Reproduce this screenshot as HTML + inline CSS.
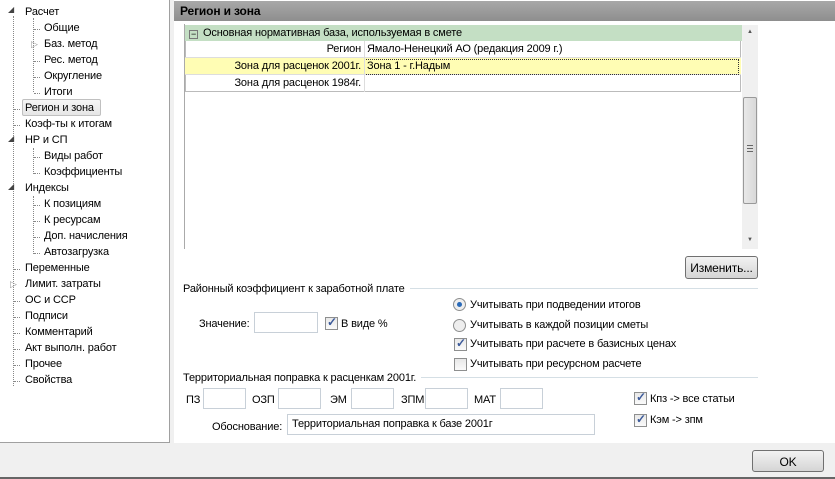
<!DOCTYPE html>
<html><head><meta charset="utf-8"><style>
*{box-sizing:border-box;margin:0;padding:0}
body{width:835px;height:479px;background:#f0f0f0;font-family:"Liberation Sans",sans-serif;font-size:11px;color:#000;position:relative;overflow:hidden;letter-spacing:-0.15px}
.a{position:absolute;white-space:nowrap}
.tree{left:0;top:0;width:170px;height:443px;background:#fff;border:1px solid #a0a0a0;border-top:none;border-left:none}
.tw{position:absolute;left:0;top:2px;width:168px;height:420px}
.ti{position:absolute;white-space:nowrap}
.vl{position:absolute;border-left:1px dotted #888}
.hl{position:absolute;border-top:1px dotted #888;width:6px}
.main{left:174px;top:0;width:661px;height:443px;background:#fff}
.hdr{left:174px;top:1px;width:661px;height:20px;background:linear-gradient(#a8a8a8,#8e8e8e);font-weight:bold;font-size:12px;padding:3px 6px;color:#000}
.inp{position:absolute;background:#fff;border:1px solid #c8d0d8;height:21px}
.cb{position:absolute;width:13px;height:13px;border:1px solid #8e8f8f;background:linear-gradient(#e8e8e8,#fafafa)}
.cb.on::after{content:"✓";position:absolute;left:1px;top:-3px;font-size:12px;color:#3c5a9a;font-weight:bold}
.rb{position:absolute;width:13px;height:13px;border:1px solid #8e8f8f;border-radius:50%;background:#eee}
.rb.on::after{content:"";position:absolute;left:3px;top:3px;width:5px;height:5px;border-radius:50%;background:#2a6ab8}
.btn{position:absolute;border:1px solid #707070;border-radius:3px;background:linear-gradient(#f2f2f2,#d5d5d5);text-align:center;font-size:12px}
.sep{position:absolute;border-top:1px solid #d5dfe5;height:0}
.lbl{background:#fff;padding-right:5px;z-index:2}
</style></head><body>
<div class="a tree"><div class="tw">
<div class="vl" style="left:13px;top:14px;height:370px"></div>
<div class="vl" style="left:33px;top:16px;height:74px"></div>
<div class="vl" style="left:33px;top:146px;height:26px"></div>
<div class="vl" style="left:33px;top:194px;height:58px"></div>
<div class="ti" style="left:8px;top:3px;font-size:8px;color:#444">◢</div><div class="ti" style="left:25px;top:4px">Расчет</div>
<div class="hl" style="left:34px;top:27px"></div><div class="ti" style="left:44px;top:20px">Общие</div>
<div class="ti" style="left:31px;top:37px;font-size:9px;color:#999">▷</div><div class="ti" style="left:44px;top:36px">Баз. метод</div>
<div class="hl" style="left:34px;top:59px"></div><div class="ti" style="left:44px;top:52px">Рес. метод</div>
<div class="hl" style="left:34px;top:75px"></div><div class="ti" style="left:44px;top:68px">Округление</div>
<div class="hl" style="left:34px;top:91px"></div><div class="ti" style="left:44px;top:84px">Итоги</div>
<div class="hl" style="left:14px;top:107px"></div><div class="ti" style="left:22px;top:97px;width:79px;height:17px;border:1px solid #c0c0c0;border-radius:2px;background:linear-gradient(#f6f6f6,#e6e6e6);padding:2px 2px">Регион и зона</div>
<div class="hl" style="left:14px;top:123px"></div><div class="ti" style="left:25px;top:116px">Коэф-ты к итогам</div>
<div class="ti" style="left:8px;top:132px;font-size:8px;color:#444">◢</div><div class="ti" style="left:25px;top:132px">НР и СП</div>
<div class="hl" style="left:34px;top:155px"></div><div class="ti" style="left:44px;top:148px">Виды работ</div>
<div class="hl" style="left:34px;top:171px"></div><div class="ti" style="left:44px;top:164px">Коэффициенты</div>
<div class="ti" style="left:8px;top:180px;font-size:8px;color:#444">◢</div><div class="ti" style="left:25px;top:180px">Индексы</div>
<div class="hl" style="left:34px;top:203px"></div><div class="ti" style="left:44px;top:196px">К позициям</div>
<div class="hl" style="left:34px;top:219px"></div><div class="ti" style="left:44px;top:212px">К ресурсам</div>
<div class="hl" style="left:34px;top:235px"></div><div class="ti" style="left:44px;top:228px">Доп. начисления</div>
<div class="hl" style="left:34px;top:251px"></div><div class="ti" style="left:44px;top:244px">Автозагрузка</div>
<div class="hl" style="left:14px;top:267px"></div><div class="ti" style="left:25px;top:260px">Переменные</div>
<div class="ti" style="left:10px;top:277px;font-size:9px;color:#999">▷</div><div class="ti" style="left:25px;top:276px">Лимит. затраты</div>
<div class="hl" style="left:14px;top:299px"></div><div class="ti" style="left:25px;top:292px">ОС и ССР</div>
<div class="hl" style="left:14px;top:315px"></div><div class="ti" style="left:25px;top:308px">Подписи</div>
<div class="hl" style="left:14px;top:331px"></div><div class="ti" style="left:25px;top:324px">Комментарий</div>
<div class="hl" style="left:14px;top:347px"></div><div class="ti" style="left:25px;top:340px">Акт выполн. работ</div>
<div class="hl" style="left:14px;top:363px"></div><div class="ti" style="left:25px;top:356px">Прочее</div>
<div class="hl" style="left:14px;top:379px"></div><div class="ti" style="left:25px;top:372px">Свойства</div>
</div></div>
<div class="a main"></div>
<div class="a hdr">Регион и зона</div>
<div class="a" style="left:184px;top:24px;width:574px;height:225px;border-left:1px solid #aaa;background:#fff"></div>
<div class="a" style="left:185px;top:25px;width:556px;height:67px;border:1px solid #bbb;border-top:none"></div>
<div class="a" style="left:185px;top:25px;width:557px;height:16px;background:#c4dfc4;padding:2px 4px;white-space:nowrap"><span style="display:inline-block;width:9px;height:9px;border:1px solid #777;font-size:9px;line-height:6px;text-align:center;vertical-align:-1px;margin-right:5px">−</span>Основная нормативная база, используемая в смете</div>
<div class="a" style="left:185px;top:41px;width:556px;height:17px;border-bottom:1px solid #ddd"></div>
<div class="a" style="left:185px;top:58px;width:556px;height:17px;background:#fffdb4;border-bottom:1px solid #ddd"></div>
<div class="a" style="left:364px;top:59px;width:375px;height:16px;border:1px dotted #333"></div>
<div class="a" style="left:364px;top:41px;height:51px;border-left:1px solid #ddd"></div>
<div class="a" style="left:185px;top:43px;width:176px;text-align:right">Регион</div>
<div class="a" style="left:185px;top:60px;width:176px;text-align:right">Зона для расценок 2001г.</div>
<div class="a" style="left:185px;top:77px;width:176px;text-align:right">Зона для расценок 1984г.</div>
<div class="a" style="left:367px;top:43px">Ямало-Ненецкий АО (редакция 2009 г.)</div>
<div class="a" style="left:367px;top:60px">Зона 1 - г.Надым</div>
<div class="a" style="left:742px;top:25px;width:16px;height:224px;background:#f0f0f0"></div>
<div class="a" style="left:747px;top:29px;font-size:6px;color:#555">▲</div>
<div class="a" style="left:747px;top:237px;font-size:6px;color:#555">▼</div>
<div class="a" style="left:743px;top:97px;width:14px;height:107px;border:1px solid #999;border-radius:2px;background:linear-gradient(90deg,#e8e8e8,#d8d8d8)"></div>
<div class="a" style="left:747px;top:145px;width:6px;height:7px;border-top:1px solid #666;border-bottom:1px solid #666"><div style="margin-top:2px;border-top:1px solid #666"></div></div>
<div class="btn" style="left:685px;top:256px;width:73px;height:23px;padding-top:4px">Изменить...</div>
<div class="sep" style="left:385px;top:288px;width:373px"></div>
<div class="a lbl" style="left:183px;top:283px">Районный коэффициент к заработной плате</div>
<div class="a" style="left:199px;top:318px">Значение:</div>
<div class="inp" style="left:254px;top:312px;width:64px"></div>
<div class="cb on" style="left:325px;top:317px"></div><div class="a" style="left:341px;top:318px">В виде %</div>
<div class="rb on" style="left:453px;top:298px"></div><div class="a" style="left:470px;top:299px">Учитывать при подведении итогов</div>
<div class="rb" style="left:453px;top:319px"></div><div class="a" style="left:470px;top:319px">Учитывать в каждой позиции сметы</div>
<div class="cb on" style="left:454px;top:338px"></div><div class="a" style="left:470px;top:338px">Учитывать при расчете в базисных ценах</div>
<div class="cb" style="left:454px;top:358px"></div><div class="a" style="left:470px;top:358px">Учитывать при ресурсном расчете</div>
<div class="sep" style="left:399px;top:377px;width:359px"></div>
<div class="a lbl" style="left:183px;top:372px">Территориальная поправка к расценкам 2001г.</div>
<div class="a" style="left:186px;top:394px">ПЗ</div><div class="inp" style="left:203px;top:388px;width:43px"></div>
<div class="a" style="left:252px;top:394px">ОЗП</div><div class="inp" style="left:278px;top:388px;width:43px"></div>
<div class="a" style="left:330px;top:394px">ЭМ</div><div class="inp" style="left:351px;top:388px;width:43px"></div>
<div class="a" style="left:401px;top:394px">ЗПМ</div><div class="inp" style="left:425px;top:388px;width:43px"></div>
<div class="a" style="left:474px;top:394px">МАТ</div><div class="inp" style="left:500px;top:388px;width:43px"></div>
<div class="cb on" style="left:634px;top:392px"></div><div class="a" style="left:650px;top:393px">Кпз -&gt; все статьи</div>
<div class="cb on" style="left:634px;top:414px"></div><div class="a" style="left:650px;top:414px">Кэм -&gt; зпм</div>
<div class="a" style="left:212px;top:421px">Обоснование:</div>
<div class="inp" style="left:287px;top:414px;width:308px;padding:3px 4px">Территориальная поправка к базе 2001г</div>
<div class="btn" style="left:752px;top:450px;width:72px;height:22px;padding-top:4px">OK</div>
<div class="a" style="left:0;top:477px;width:835px;height:2px;background:#666"></div>
</body></html>
